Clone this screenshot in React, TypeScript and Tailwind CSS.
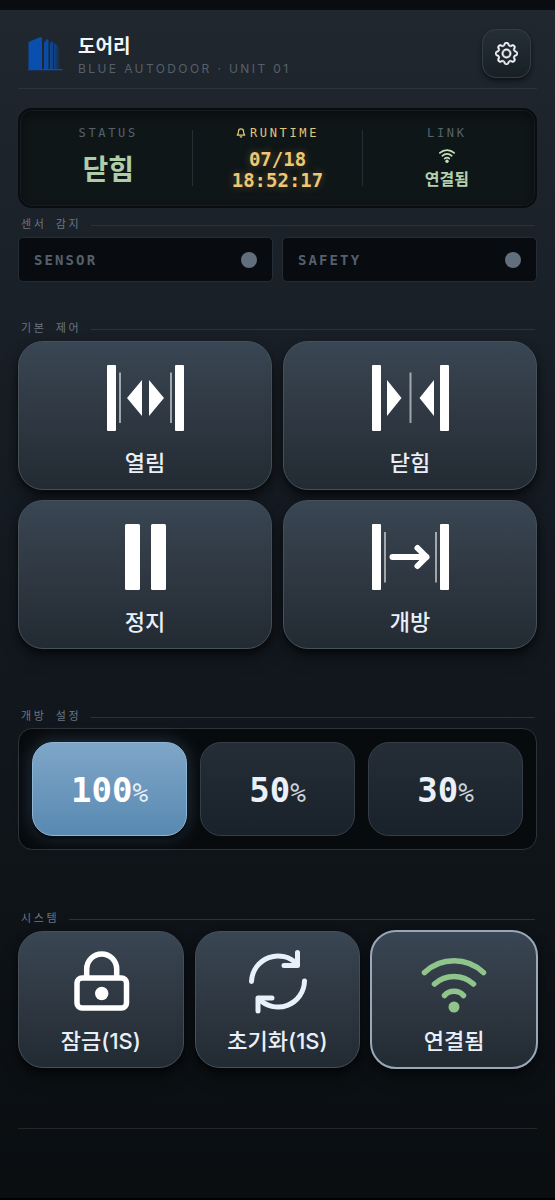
import { useState } from 'react'
import type { ReactNode } from 'react'
import { BsGear } from 'react-icons/bs'
import { FiBell } from 'react-icons/fi'

type OpenRatio = 100 | 50 | 30

const MONO = "font-['DejaVu_Sans_Mono','Noto_Sans_CJK_KR',monospace]"
const RATIOS: OpenRatio[] = [100, 50, 30]

function LogoIcon() {
  return (
    <svg width="36" height="34" viewBox="0 0 36 34" aria-hidden="true">
      <defs>
        <linearGradient id="logo-fade" x1="0" x2="1" y1="0" y2="0">
          <stop offset="0" stopColor="#0a4fae" />
          <stop offset="1" stopColor="#0a4fae" stopOpacity="0.1" />
        </linearGradient>
      </defs>
      <path d="M0.500 5 12.500 0 14 1V32H0.500z" fill="#0a4fae" />
      <path d="M16 5.500 19 2 20.500 3V32H16z" fill="#0c4ba4" />
      <path d="M22 6.500 24 4l1 1v27h-3z" fill="#0e4590" />
      <path d="M26 6l3 1.500 3 4v20.500h-6z" fill="url(#logo-fade)" opacity="0.7" />
      <path d="M0 32h34.500v1.300H0z" fill="#0a4fae" />
    </svg>
  )
}

function OpenIcon() {
  return (
    <svg width="77" height="66" viewBox="0 0 77 66" fill="#fff" aria-hidden="true">
      <rect width="9" height="66" rx="1" />
      <rect x="68" width="9" height="66" rx="1" />
      <path d="M12 7.500h2v50.500h-2zM63 7.500h2v50.500h-2z" opacity="0.55" />
      <path d="M20 33 35 15v36zM57 33 42 15v36z" />
    </svg>
  )
}

function CloseIcon() {
  return (
    <svg width="77" height="66" viewBox="0 0 77 66" fill="#fff" aria-hidden="true">
      <rect width="9" height="66" rx="1" />
      <rect x="68" width="9" height="66" rx="1" />
      <path d="M37.500 7.500h2v50.500h-2z" opacity="0.55" />
      <path d="M29.500 33 15 15v36zM47.500 33 62 15v36z" />
    </svg>
  )
}

function StopIcon() {
  return (
    <svg width="41" height="66" viewBox="0 0 41 66" fill="#fff" aria-hidden="true">
      <rect width="15" height="66" rx="1.500" />
      <rect x="26" width="15" height="66" rx="1.500" />
    </svg>
  )
}

function HoldOpenIcon() {
  return (
    <svg width="77" height="66" viewBox="0 0 77 66" fill="#fff" aria-hidden="true">
      <rect width="9" height="66" rx="1" />
      <rect x="68" width="9" height="66" rx="1" />
      <path d="M12 8h2v50.500h-2zM63 8h2v50.500h-2z" opacity="0.55" />
      <path
        d="M20.500 33H54.500M45.500 24l9 9-9 9"
        fill="none"
        stroke="#fff"
        strokeWidth="6"
        strokeLinecap="round"
        strokeLinejoin="round"
      />
    </svg>
  )
}

function LockIcon() {
  return (
    <svg width="66" height="66" viewBox="0 0 66 66" fill="none" stroke="#fff" strokeWidth="5.500" aria-hidden="true">
      <rect x="9" y="30" width="49.500" height="30" rx="5" />
      <path d="M18.700 30v-9a15 15 0 0 1 30 0v9" />
      <circle cx="33.700" cy="45.500" r="6.700" fill="#fff" stroke="none" />
    </svg>
  )
}

function ResetIcon() {
  return (
    <svg
      width="66"
      height="66"
      viewBox="0 0 66 66"
      fill="none"
      stroke="#e8f0fa"
      strokeWidth="5"
      strokeLinecap="round"
      strokeLinejoin="round"
      aria-hidden="true"
    >
      <path d="M7.500 33.500A26.500 26.500 0 0 1 53.500 16.500" />
      <path d="M53.500 4.500V17.500H40" />
      <path d="M60.500 33A26.500 26.500 0 0 1 14.500 50.500" />
      <path d="M28 50H14V63" />
    </svg>
  )
}

function WifiIcon({ className, strokeWidth = 5.5 }: { className: string; strokeWidth?: number }) {
  return (
    <svg
      className={className}
      viewBox="0 9 66 58"
      fill="none"
      stroke="currentColor"
      strokeWidth={strokeWidth}
      strokeLinecap="round"
      aria-hidden="true"
    >
      <path d="M3.500 25.500a43 43 0 0 1 59 0" />
      <path d="M13.500 37a29 29 0 0 1 39 0" />
      <path d="M23.500 48.500a13 13 0 0 1 19 0" />
      <circle cx="33" cy="60" r={strokeWidth} fill="currentColor" stroke="none" />
    </svg>
  )
}

function SectionLabel({ children }: { children: ReactNode }) {
  return (
    <div className="flex items-center gap-[10px] pl-[3px] pr-0.5">
      <h2 className={`${MONO} text-[11px] leading-4 tracking-[0.24em] text-[#6b7682]`}>{children}</h2>
      <span className="h-px flex-1 bg-[#2b3239]" />
    </div>
  )
}

function StatusColumn({ label, children }: { label: ReactNode; children: ReactNode }) {
  return (
    <div className="flex flex-col items-center">
      <div className={`${MONO} flex items-center gap-1 text-xs leading-4 tracking-[0.22em] text-[#56616b]`}>{label}</div>
      <div className="mt-2 flex h-[42px] flex-col items-center justify-center">{children}</div>
    </div>
  )
}

function SensorBox({ name, active }: { name: string; active: boolean }) {
  return (
    <div className="flex h-[45px] items-center justify-between rounded-[5px] border border-[#252c33] bg-[#080c10] px-[15px]">
      <span className={`${MONO} text-sm font-bold tracking-[0.15em] text-[#56606b]`}>{name}</span>
      <span className={`size-4 rounded-full ${active ? 'bg-[#8fc48b]' : 'bg-[#626e7c]'}`} />
    </div>
  )
}

const cardBase =
  'flex flex-col items-center rounded-[25px] border border-[#465059] bg-linear-to-b from-[#394653] via-[#2d353f] via-60% to-[#222b32] text-[22px] font-medium leading-8 text-[#eaf0fa] shadow-[0_4px_6px_rgba(0,0,0,0.5),0_10px_18px_rgba(0,0,0,0.3)]'

function ControlButton({ icon, label }: { icon: ReactNode; label: string }) {
  return (
    <button type="button" className={`${cardBase} gap-4 pt-[23px] pb-[10px]`}>
      {icon}
      <span>{label}</span>
    </button>
  )
}

function SystemButton({ icon, label, focused }: { icon: ReactNode; label: string; focused?: boolean }) {
  return (
    <button
      type="button"
      className={`${cardBase} gap-[11px] pt-4 pb-[10px] ${focused ? 'outline-2 -outline-offset-1 outline-[#98a8ba]' : ''}`}
    >
      <span className="flex h-[66px] items-end">{icon}</span>
      <span>{label}</span>
    </button>
  )
}

export default function App() {
  const [ratio, setRatio] = useState<OpenRatio>(100)

  return (
    <div className="min-h-screen border-t-10 border-b-2 border-t-[#090c11] border-b-black bg-linear-to-b from-[#20272f] via-[#141a21] via-45% to-[#0a0e11] px-[18px] font-['Inter','Noto_Sans_CJK_KR',sans-serif]">
      <header className="flex items-center justify-between border-b border-[#2c343d] pt-[19px] pr-1.5 pb-[10px] pl-[10px]">
        <div className="flex items-center gap-[14px]">
          <LogoIcon />
          <div className="pt-1">
            <h1 className="text-[19px] leading-6 font-bold text-[#f2f6fc]">도어리</h1>
            <p className="mt-0.5 text-xs leading-4 tracking-[0.2em] text-[#56606a]">BLUE AUTODOOR · UNIT 01</p>
          </div>
        </div>
        <button
          type="button"
          aria-label="설정"
          className="flex size-[49px] items-center justify-center rounded-[14px] border border-[#343d46] bg-linear-to-b from-[#252d36] to-[#182027] text-[#f2f6fc] shadow-[0_3px_5px_rgba(0,0,0,0.5)]"
        >
          <BsGear size={23} strokeWidth={0.4} />
        </button>
      </header>

      <main>
        <section className="mt-[19px] grid grid-cols-[1fr_1px_1fr_1px_1fr] items-center rounded-[14px] border-2 border-[#090c10] bg-[#0f1618] px-1 py-[15px] shadow-[inset_0_0_0_1px_#161d20,inset_0_4px_10px_rgba(0,0,0,0.5)]">
          <StatusColumn label="STATUS">
            <span className="text-[28px] font-bold text-[#afcda9]">닫힘</span>
          </StatusColumn>
          <span className="h-14 bg-[#262e33]" />
          <StatusColumn
            label={
              <span className="flex items-center gap-1 text-[#e0c777]">
                <FiBell size={10} strokeWidth={3} />
                RUNTIME
              </span>
            }
          >
            <time
              className={`${MONO} text-center text-[19px] leading-[21px] font-bold text-[#edc775] [text-shadow:0_0_8px_rgba(242,180,80,0.35)]`}
            >
              07/18
              <br />
              18:52:17
            </time>
          </StatusColumn>
          <span className="h-14 bg-[#262e33]" />
          <StatusColumn label="LINK">
            <WifiIcon className="h-4 w-[18px] text-[#c3dfbc]" strokeWidth={7} />
            <span className="mt-1 text-base leading-6 font-bold text-[#b4d2ae]">연결됨</span>
          </StatusColumn>
        </section>

        <section className="mt-[9px]">
          <SectionLabel>센서 감지</SectionLabel>
          <div className="mt-1 grid grid-cols-2 gap-[9px]">
            <SensorBox name="SENSOR" active={false} />
            <SensorBox name="SAFETY" active={false} />
          </div>
        </section>

        <section className="mt-[39px]">
          <SectionLabel>기본 제어</SectionLabel>
          <div className="mt-1 grid grid-cols-2 gap-x-[11px] gap-y-[10px]">
            <ControlButton icon={<OpenIcon />} label="열림" />
            <ControlButton icon={<CloseIcon />} label="닫힘" />
            <ControlButton icon={<StopIcon />} label="정지" />
            <ControlButton icon={<HoldOpenIcon />} label="개방" />
          </div>
        </section>

        <section className="mt-[60px]">
          <SectionLabel>개방 설정</SectionLabel>
          <div className="mt-[3px] grid grid-cols-3 gap-[13px] rounded-[14px] border border-[#2d3338] bg-[#080b0e] p-[13px]">
            {RATIOS.map((value) => (
              <button
                key={value}
                type="button"
                aria-pressed={ratio === value}
                onClick={() => setRatio(value)}
                className={`${MONO} h-[94px] rounded-[21px] border pt-0.5 text-[34px] font-bold ${
                  ratio === value
                    ? 'border-[#8fb6d4] bg-linear-to-b from-[#7fa6c8] to-[#5889b1] text-white shadow-[0_3px_3px_rgba(0,0,0,0.6),0_0_18px_rgba(90,140,180,0.35)]'
                    : 'border-[#353e46] bg-linear-to-b from-[#252e36] to-[#19212a] text-[#eaf0fa]'
                }`}
              >
                {value}
                <span className="text-[26px] font-normal opacity-85">%</span>
              </button>
            ))}
          </div>
        </section>

        <section className="mt-[61px]">
          <SectionLabel>시스템</SectionLabel>
          <div className="mt-1 grid grid-cols-3 gap-[11px]">
            <SystemButton icon={<LockIcon />} label="잠금(1S)" />
            <SystemButton icon={<ResetIcon />} label="초기화(1S)" />
            <SystemButton icon={<WifiIcon className="h-[58px] w-[66px] text-[#8fc48b]" />} label="연결됨" focused />
          </div>
        </section>
      </main>

      <footer className="mt-[60px] border-t border-[#22272b]" />
    </div>
  )
}
